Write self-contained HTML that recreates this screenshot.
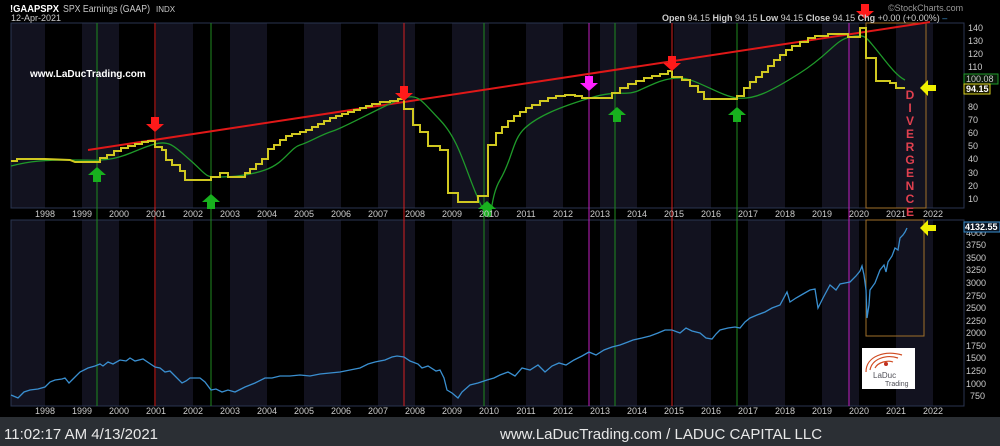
<!DOCTYPE html>
<html><head><meta charset="utf-8"><style>
html,body{margin:0;padding:0;background:#000;width:1000px;height:446px;overflow:hidden;font-family:"Liberation Sans",sans-serif}
svg{display:block}
</style></head><body>
<svg width="1000" height="446" viewBox="0 0 1000 446" xmlns="http://www.w3.org/2000/svg" font-family="Liberation Sans, sans-serif">
<rect width="1000" height="446" fill="#000"/>
<g fill="#12121f">
<rect x="11" y="23" width="34" height="185"/><rect x="82" y="23" width="37" height="185"/><rect x="156" y="23" width="37" height="185"/><rect x="230" y="23" width="37" height="185"/><rect x="304" y="23" width="37" height="185"/><rect x="378" y="23" width="37" height="185"/><rect x="452" y="23" width="37" height="185"/><rect x="526" y="23" width="37" height="185"/><rect x="600" y="23" width="37" height="185"/><rect x="674" y="23" width="37" height="185"/><rect x="748" y="23" width="37" height="185"/><rect x="822" y="23" width="37" height="185"/><rect x="896" y="23" width="37" height="185"/>
<rect x="11" y="220" width="34" height="186"/><rect x="82" y="220" width="37" height="186"/><rect x="156" y="220" width="37" height="186"/><rect x="230" y="220" width="37" height="186"/><rect x="304" y="220" width="37" height="186"/><rect x="378" y="220" width="37" height="186"/><rect x="452" y="220" width="37" height="186"/><rect x="526" y="220" width="37" height="186"/><rect x="600" y="220" width="37" height="186"/><rect x="674" y="220" width="37" height="186"/><rect x="748" y="220" width="37" height="186"/><rect x="822" y="220" width="37" height="186"/><rect x="896" y="220" width="37" height="186"/>
</g>
<rect x="11" y="23" width="953" height="185" fill="none" stroke="#2a3550"/>
<rect x="11" y="220" width="953" height="186" fill="none" stroke="#2a3550"/>
<g stroke-width="1">
<line x1="97" y1="23" x2="97" y2="406" stroke="#1f8a1f"/>
<line x1="155" y1="23" x2="155" y2="406" stroke="#d42020"/>
<line x1="211" y1="23" x2="211" y2="406" stroke="#1f8a1f"/>
<line x1="404" y1="23" x2="404" y2="406" stroke="#d42020"/>
<line x1="484" y1="23" x2="484" y2="406" stroke="#1f8a1f"/>
<line x1="589" y1="23" x2="589" y2="406" stroke="#c020c0"/>
<line x1="615" y1="23" x2="615" y2="406" stroke="#1f8a1f"/>
<line x1="672" y1="23" x2="672" y2="406" stroke="#d42020"/>
<line x1="737" y1="23" x2="737" y2="406" stroke="#1f8a1f"/>
<line x1="849" y1="23" x2="849" y2="406" stroke="#c020c0"/>
</g>
<rect x="866" y="23" width="60" height="185" fill="none" stroke="#a0702a"/>
<rect x="866" y="220" width="58" height="116" fill="none" stroke="#a0702a"/>
<line x1="88" y1="150" x2="930" y2="22" stroke="#e01818" stroke-width="2"/>
<path d="M11,166 C30,161 45,160 70,160 S95,161 110,159 S140,148 155,144 S175,147 190,160 S205,177 215,177 S245,177 265,170 S290,148 300,145 S320,135 333,131 S390,102 404,98 S420,99 440,120 S465,170 480,203 S487,202 500,180 S512,140 525,128 S560,107 590,98 S625,97 640,90 S665,78 680,78 S720,96 737,98 S770,92 800,73 S835,40 850,37 S865,36 875,48 S895,75 905,80" fill="none" stroke="#1f9a2a" stroke-width="1.3"/>
<polyline fill="none" stroke="#d0c820" stroke-width="2" points="11,161 17,161 17,159 45,159 70,160 75,162 95,162 100,162 100,158 107,158 107,155 114,155 114,151 121,151 121,148 128,148 128,146 135,146 135,144 142,144 142,142 148,142 148,141 155,141 155,147 162,147 162,150 166,150 166,160 172,160 172,165 180,165 180,171 185,171 185,180 211,180 211,177 220,177 220,173 228,173 228,177 245,177 245,173 250,173 250,169 256,169 256,164 262,164 262,159 268,159 268,149 274,149 274,145 280,145 280,140 286,140 286,136 292,136 292,134 300,134 300,132 306,132 306,130 312,130 312,127 318,127 318,124 324,124 324,121 330,121 330,118 336,118 336,116 342,116 342,114 348,114 348,112 354,112 354,110 360,110 360,108 366,108 366,106 372,106 372,104 380,104 380,102 390,102 390,101 398,101 398,99 404,99 404,109 413,109 413,125 420,125 420,132 428,132 428,146 440,146 440,150 448,150 448,193 458,193 458,202 478,202 478,196 488,196 488,145 496,145 496,133 502,133 502,127 508,127 508,121 514,121 514,116 520,116 520,112 526,112 526,108 532,108 532,105 540,105 540,101 548,101 548,98 556,98 556,96 565,96 565,95 575,95 575,96 582,96 582,98 612,98 612,93 620,93 620,88 628,88 628,84 636,84 636,81 644,81 644,78 652,78 652,76 660,76 660,74 668,74 668,71 672,71 672,77 682,77 682,80 690,80 690,86 698,86 698,92 704,92 704,99 737,99 737,96 744,96 744,88 750,88 750,82 756,82 756,77 762,77 762,72 768,72 768,66 774,66 774,60 780,60 780,55 786,55 786,50 792,50 792,46 800,46 800,42 808,42 808,38 815,38 815,36 828,36 828,34 848,34 848,37 860,37 860,28 866,28 866,58 876,58 876,81 890,81 890,83 896,83 896,88 905,88"/>
<polyline fill="none" stroke="#3a8fd0" stroke-width="1.3" points="11,395 18,398 24,392 30,390 38,389 45,387 50,382 55,380 62,379 65,378 69,383 72,380 80,372 88,368 95,366 100,364 103,366 108,362 113,364 120,360 126,361 130,358 135,361 143,359 149,363 155,367 160,368 165,372 170,371 176,377 182,383 186,381 190,378 200,378 205,382 211,390 216,389 222,392 228,390 235,392 245,387 255,383 265,378 272,378 280,376 290,376 300,375 310,376 320,374 330,373 340,372 350,370 360,368 368,364 375,362 385,360 392,357 397,356 404,357 410,361 418,364 422,368 428,366 436,371 440,370 444,378 447,390 452,393 458,398 462,392 470,385 478,383 487,380 494,378 500,375 508,372 515,376 522,368 530,370 538,365 545,372 552,366 559,363 566,365 574,360 582,356 589,352 596,355 604,350 612,347 620,345 628,342 633,340 642,338 650,336 658,333 665,330 672,330 680,333 686,328 692,331 700,333 706,338 712,339 716,334 720,330 728,328 735,327 740,328 745,322 750,318 757,315 765,312 772,308 780,305 787,292 790,302 796,298 803,294 810,290 815,289 818,308 823,298 830,285 836,290 840,284 845,283 850,282 856,276 860,271 862,266 864,275 866,290 867,318 869,305 870,290 875,283 880,270 884,265 886,272 888,262 892,256 895,248 898,250 900,238 903,235 905,232 907,228"/>
<g fill="#ff1a1a">
<path d="M151,117 h8 v7 h5 l-9,8 l-9,-8 h5z"/>
<path d="M400,86 h8 v7 h5 l-9,8 l-9,-8 h5z"/>
<path d="M668,56 h8 v7 h5 l-9,8 l-9,-8 h5z"/>
<path d="M861,4 h8 v7 h5 l-9,8 l-9,-8 h5z"/>
</g>
<path d="M585,76 h8 v7 h5 l-9,8 l-9,-8 h5z" fill="#ff20ff"/>
<g fill="#18b01e">
<path d="M97,167 l9,8 h-5 v7 h-8 v-7 h-5z"/>
<path d="M211,194 l9,8 h-5 v7 h-8 v-7 h-5z"/>
<path d="M487,201 l9,8 h-5 v7 h-8 v-7 h-5z"/>
<path d="M617,107 l9,8 h-5 v7 h-8 v-7 h-5z"/>
<path d="M737,107 l9,8 h-5 v7 h-8 v-7 h-5z"/>
</g>
<g fill="#f0f000">
<path d="M920,88 l8,-8 v5 h8 v6 h-8 v5z"/>
<path d="M920,228 l8,-8 v5 h8 v6 h-8 v5z"/>
</g>
<g fill="#e0404f" font-size="12" font-weight="bold" text-anchor="middle">
<text x="910" y="99">D</text><text x="910" y="112">I</text><text x="910" y="125">V</text><text x="910" y="138">E</text><text x="910" y="151">R</text><text x="910" y="164">G</text><text x="910" y="177">E</text><text x="910" y="190">N</text><text x="910" y="203">C</text><text x="910" y="216">E</text>
</g>
<rect x="862" y="348" width="53" height="41" fill="#fff"/>
<path d="M866,372 C866,356 885,350 902,355 M870,370 C872,359 886,354 898,358 M875,368 C878,362 888,360 893,362" fill="none" stroke="#d04a20" stroke-width="1.2"/>
<circle cx="886" cy="364" r="2" fill="#c03020"/>
<text x="873" y="378" font-size="8" fill="#505058">LaDuc</text>
<text x="885" y="386" font-size="7" fill="#505058">Trading</text>
<text x="10" y="12" font-size="10" fill="#fff" font-weight="bold" textLength="49" lengthAdjust="spacingAndGlyphs">!GAAPSPX</text>
<text x="63" y="12" font-size="10" fill="#c8c8c8" textLength="87" lengthAdjust="spacingAndGlyphs">SPX Earnings (GAAP)</text>
<text x="156" y="12" font-size="8" fill="#c8c8c8">INDX</text>
<text x="11" y="21" font-size="9" fill="#c8c8c8">12-Apr-2021</text>
<text x="30" y="77" font-size="10" fill="#fff" font-weight="bold">www.LaDucTrading.com</text>
<text x="888" y="11" font-size="9" fill="#999">©StockCharts.com</text>
<text x="662" y="21" font-size="9" fill="#ccc"><tspan font-weight="bold">Open</tspan> 94.15 <tspan font-weight="bold">High</tspan> 94.15 <tspan font-weight="bold">Low</tspan> 94.15 <tspan font-weight="bold">Close</tspan> 94.15 <tspan font-weight="bold">Chg</tspan> +0.00 (+0.00%) <tspan fill="#3a8fd0">–</tspan></text>
<g font-size="9" fill="#ccc">
<text x="968" y="31">140</text><text x="968" y="44">130</text><text x="968" y="57">120</text><text x="968" y="70">110</text><text x="968" y="110">80</text><text x="968" y="123">70</text><text x="968" y="136">60</text><text x="968" y="149">50</text><text x="968" y="162">40</text><text x="968" y="176">30</text><text x="968" y="189">20</text><text x="968" y="202">10</text>
</g>
<rect x="964" y="74" width="34" height="10" fill="#0a1a0a" stroke="#1f9a2a"/>
<text x="966" y="82" font-size="9" fill="#ccc">100.08</text>
<rect x="964" y="84" width="26" height="10" fill="#1a1a00" stroke="#d8d020"/>
<text x="966" y="92" font-size="9" fill="#fff" font-weight="bold">94.15</text>
<g font-size="9" fill="#ccc">
<text x="966" y="236">4000</text><text x="966" y="248">3750</text><text x="966" y="261">3500</text><text x="966" y="273">3250</text><text x="966" y="286">3000</text><text x="966" y="299">2750</text><text x="966" y="311">2500</text><text x="966" y="324">2250</text><text x="966" y="336">2000</text><text x="966" y="349">1750</text><text x="966" y="361">1500</text><text x="966" y="374">1250</text><text x="966" y="387">1000</text><text x="970" y="399">750</text>
</g>
<rect x="964" y="222" width="36" height="10" fill="#0a1422" stroke="#3a8fd0"/>
<text x="965" y="230" font-size="9" fill="#fff" font-weight="bold">4132.55</text>
<g font-size="9" fill="#ccc" text-anchor="middle">
<text x="45" y="217">1998</text><text x="82" y="217">1999</text><text x="119" y="217">2000</text><text x="156" y="217">2001</text><text x="193" y="217">2002</text><text x="230" y="217">2003</text><text x="267" y="217">2004</text><text x="304" y="217">2005</text><text x="341" y="217">2006</text><text x="378" y="217">2007</text><text x="415" y="217">2008</text><text x="452" y="217">2009</text><text x="489" y="217">2010</text><text x="526" y="217">2011</text><text x="563" y="217">2012</text><text x="600" y="217">2013</text><text x="637" y="217">2014</text><text x="674" y="217">2015</text><text x="711" y="217">2016</text><text x="748" y="217">2017</text><text x="785" y="217">2018</text><text x="822" y="217">2019</text><text x="859" y="217">2020</text><text x="896" y="217">2021</text><text x="933" y="217">2022</text>
<text x="45" y="414">1998</text><text x="82" y="414">1999</text><text x="119" y="414">2000</text><text x="156" y="414">2001</text><text x="193" y="414">2002</text><text x="230" y="414">2003</text><text x="267" y="414">2004</text><text x="304" y="414">2005</text><text x="341" y="414">2006</text><text x="378" y="414">2007</text><text x="415" y="414">2008</text><text x="452" y="414">2009</text><text x="489" y="414">2010</text><text x="526" y="414">2011</text><text x="563" y="414">2012</text><text x="600" y="414">2013</text><text x="637" y="414">2014</text><text x="674" y="414">2015</text><text x="711" y="414">2016</text><text x="748" y="414">2017</text><text x="785" y="414">2018</text><text x="822" y="414">2019</text><text x="859" y="414">2020</text><text x="896" y="414">2021</text><text x="933" y="414">2022</text>
</g>
<rect x="0" y="417" width="1000" height="29" fill="#2b2f34"/>
<text x="4" y="439" font-size="15" fill="#e8e8e8">11:02:17 AM 4/13/2021</text>
<text x="500" y="439" font-size="15" fill="#e8e8e8">www.LaDucTrading.com / LADUC CAPITAL LLC</text>
</svg>
</body></html>
